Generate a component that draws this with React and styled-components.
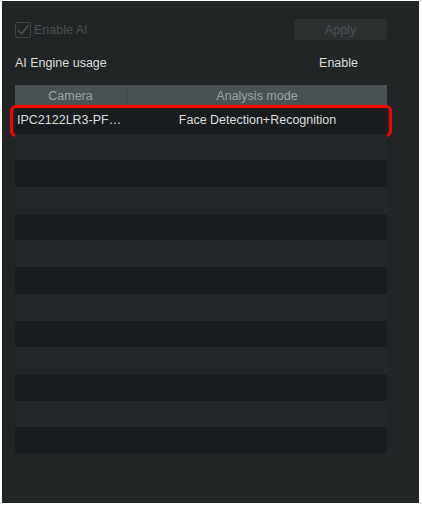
import React from "react";
import styled, { createGlobalStyle } from "styled-components";

const GlobalStyle = createGlobalStyle`
  html, body {
    margin: 0;
    padding: 0;
    background: #ffffff;
  }
  body {
    font-family: "Liberation Sans", Arial, sans-serif;
  }
`;

const rows = [
  { camera: "IPC2122LR3-PF…", mode: "Face Detection+Recognition", selected: true },
  ...Array.from({ length: 12 }, () => ({ camera: "", mode: "" })),
];

export default function App() {
  return (
    <>
      <GlobalStyle />
      <Panel>
        <TopBar>
          <CheckLabel>
            <CheckBox>
              <svg width="14" height="14" viewBox="0 0 14 14">
                <path d="M2 7.2 L5.6 11 L12.2 2.4" fill="none" stroke="#4f5556" strokeWidth="1.4" />
              </svg>
            </CheckBox>
            Enable AI
          </CheckLabel>
          <ApplyButton disabled>Apply</ApplyButton>
        </TopBar>
        <UsageRow>
          <span>AI Engine usage</span>
          <UsageValue>Enable</UsageValue>
        </UsageRow>
        <Table>
          <HeadRow>
            <HeadCell $w="111px">Camera</HeadCell>
            <HeadCell $flex>Analysis mode</HeadCell>
          </HeadRow>
          {rows.map((r, i) => (
            <Row key={i} $dark={i % 2 === 0} $selected={r.selected}>
              <Cell $w="111px" $left>{r.camera}</Cell>
              <Cell $flex>{r.mode}</Cell>
            </Row>
          ))}
        </Table>
      </Panel>
    </>
  );
}

const Panel = styled.div`
  box-sizing: border-box;
  margin: 1px 3px 0 2px;
  height: 502px;
  background: #212525;
  padding: 18px 32px 0 13px;
  display: flex;
  flex-direction: column;
`;

const TopBar = styled.div`
  display: flex;
  align-items: center;
  justify-content: space-between;
  height: 21px;
`;

const CheckLabel = styled.label`
  display: flex;
  align-items: center;
  gap: 3px;
  color: #4b5051;
  font-size: 12.5px;
`;

const CheckBox = styled.span`
  box-sizing: border-box;
  width: 16px;
  height: 16px;
  border: 1px solid #3f4445;
  border-radius: 2px;
  display: flex;
  align-items: center;
  justify-content: center;
`;

const ApplyButton = styled.button`
  width: 93px;
  height: 21px;
  border: none;
  border-radius: 3px;
  background: #2c3031;
  color: #4d5253;
  font-family: "Liberation Sans", Arial, sans-serif;
  font-size: 12.5px;
  padding: 0;
`;

const UsageRow = styled.div`
  display: flex;
  justify-content: space-between;
  align-items: center;
  height: 16px;
  margin-top: 15px;
  color: #dcdede;
  font-size: 12.5px;
  padding-right: 29px;
`;

const UsageValue = styled.span`
  color: #dcdede;
`;

const Table = styled.div`
  margin-top: 14px;
  display: flex;
  flex-direction: column;
`;

const HeadRow = styled.div`
  display: flex;
  height: 22px;
  background: #495153;
`;

const HeadCell = styled.div`
  ${(p) => (p.$flex ? "flex: 1;" : `width: ${p.$w};`)}
  display: flex;
  align-items: center;
  justify-content: center;
  color: #9ea3a4;
  font-size: 12.5px;
  & + & {
    border-left: 1px solid #3f4648;
  }
`;

const Row = styled.div`
  position: relative;
  display: flex;
  height: 26.7px;
  background: ${(p) => (p.$dark ? "#1a1d1f" : "#232729")};
  ${(p) =>
    p.$selected &&
    `
    &::after {
      content: "";
      position: absolute;
      left: -5px;
      right: -5px;
      top: -2px;
      bottom: -3px;
      border: 3px solid #ff0000;
      border-radius: 6px;
      pointer-events: none;
    }
  `}
`;

const Cell = styled.div`
  ${(p) => (p.$flex ? "flex: 1;" : `width: ${p.$w};`)}
  display: flex;
  align-items: center;
  justify-content: ${(p) => (p.$left ? "flex-start" : "center")};
  padding-left: ${(p) => (p.$left ? "2px" : "0")};
  color: #dcdede;
  font-size: 12.5px;
  white-space: nowrap;
  overflow: hidden;
`;
